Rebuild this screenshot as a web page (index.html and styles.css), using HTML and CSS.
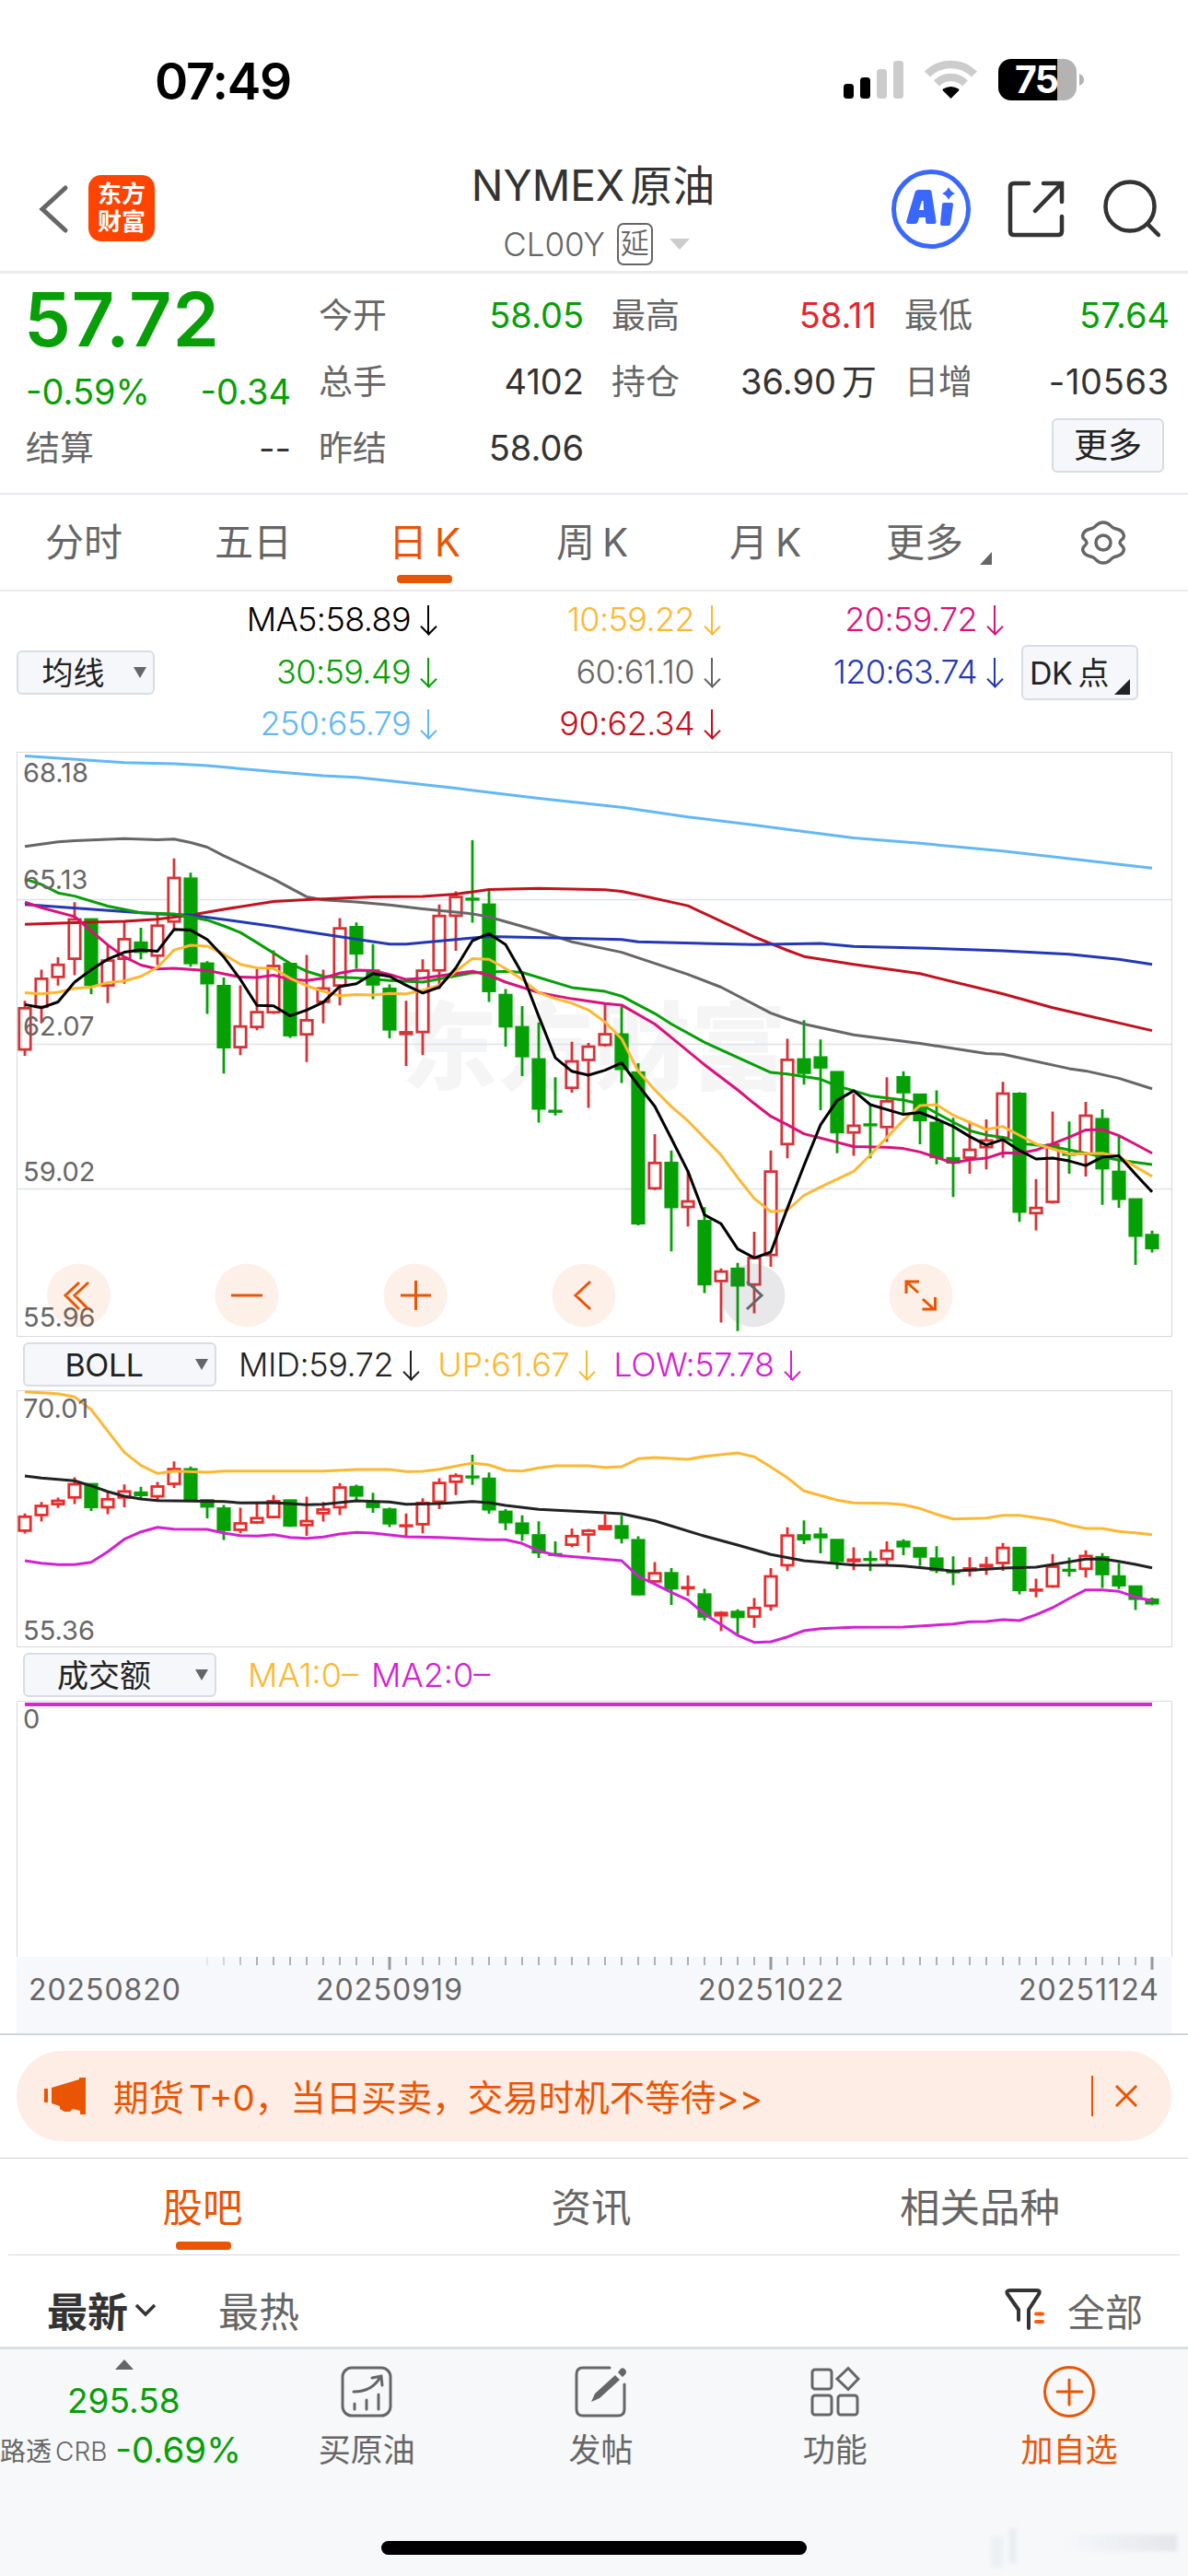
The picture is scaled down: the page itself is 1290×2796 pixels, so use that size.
FILE: index.html
```html
<!DOCTYPE html>
<html lang="zh-CN">
<head>
	<meta charset="utf-8">
	<title>NYMEX原油</title>
	<link rel="stylesheet" href="styles.css">
</head>
<body>
<div class="page">
  <!-- status bar -->
  <div class="status">
    <span class="time">07:49</span>
    <svg class="status-icons" width="266" height="50" viewBox="914 62 266 50">
      <rect x="916" y="91" width="11" height="16" rx="3.5"/>
      <rect x="934" y="84" width="11" height="23" rx="3.5"/>
      <rect x="952" y="75" width="11" height="32" rx="3.5" fill="#ccc"/>
      <rect x="970" y="66" width="11" height="41" rx="3.5" fill="#ccc"/>
      <path d="M1007 80.5a36 36 0 0 1 51 0" fill="none" stroke="#ccc" stroke-width="8.5"/>
      <path d="M1017 90.5a22 22 0 0 1 31 0" fill="none" stroke="#ccc" stroke-width="8.5"/>
      <path d="M1032.5 107l-8.5-8.5q-1-1 0-2q8.5-5 17 0q1 1 0 2z"/>
      <path d="M1098 64h50v45h-50a14 14 0 0 1-14-14v-17a14 14 0 0 1 14-14z"/>
      <path d="M1148 64h7a14 14 0 0 1 14 14v17a14 14 0 0 1-14 14h-7z" fill="#b3b3b3"/>
      <path d="M1172 80q5 2 5 6.5t-5 6.5z" fill="#b3b3b3"/>
      <text class="battery" x="1102" y="101" textLength="48">75</text>
    </svg>
  </div>

  <!-- title bar -->
  <div class="header">
    <svg class="back" width="34" height="54" viewBox="0 0 34 54"><path d="M30 4L5 27l25 23"/></svg>
    <div class="logo"><span>东方</span><span>财富</span></div>
    <div class="title">
      <div class="name">NYMEX<span class="cn">原油</span></div>
      <div class="code"><span>CL00Y</span><b>延</b><i></i></div>
    </div>
    <svg class="head-icons" width="294" height="90" viewBox="966 182 294 90">
      <circle cx="1011" cy="227" r="40.5" stroke="#3a68ff" stroke-width="5"/>
      <path class="ai" fill-rule="evenodd" d="M997 206h12q2 0 2.5 2l5 32q.5 3-2.5 3h-7q-2 0-2-3v-4h-7l-1 4q-1 3-3 3h-7q-4 0-2.5-4l9-30q1-3 3.5-3zM1001 218l-3 10h5l-.5-10z"/>
      <path class="ai" d="M1025 220h8q2 0 2 2l-3 21q0 2-2 2h-7q-2 0-2-2l2-21q0-2 2-2zM1030 203q2 5 7 7q-5 2-7 7q-2-5-7-7q5-2 7-7z"/>
      <path d="M1117 199h-16q-4 0-4 4v48q0 4 4 4h48q4 0 4-4v-16M1133 199h20v20M1152 200l-28 29"/>
      <circle cx="1227" cy="224" r="26.5"/>
      <path d="M1246 243l12 12"/>
    </svg>
  </div>

  <!-- quote -->
  <div class="quote">
    <div class="col first">
      <div class="price green">57.72</div>
      <div class="row green"><span>-0.59%</span><span>-0.34</span></div>
      <div class="row"><label>结算</label><span>--</span></div>
    </div>
    <div class="col">
      <div class="row"><label>今开</label><span class="green">58.05</span></div>
      <div class="row"><label>总手</label><span>4102</span></div>
      <div class="row"><label>昨结</label><span>58.06</span></div>
    </div>
    <div class="col">
      <div class="row"><label>最高</label><span class="red">58.11</span></div>
      <div class="row"><label>持仓</label><span>36.90<span class="cn">万</span></span></div>
    </div>
    <div class="col">
      <div class="row"><label>最低</label><span class="green">57.64</span></div>
      <div class="row"><label>日增</label><span class="wide">-10563</span></div>
      <div class="row end"><a class="btn more">更多</a></div>
    </div>
  </div>

  <!-- period tabs -->
  <div class="periods">
    <span>分时</span>
    <span>五日</span>
    <span class="on">日<em>K</em></span>
    <span>周<em>K</em></span>
    <span>月<em>K</em></span>
    <span class="drop">更多</span>
    <svg width="50" height="50" viewBox="0 0 50 50"><path d="M25 3C32 3 32 7 36 9S45 10 47 16S43 21 43 25S49 28 47 34S40 39 36 41S32 47 25 47S18 43 14 41S5 40 3 34S7 29 7 25S1 22 3 16S10 11 14 9S18 3 25 3z"/><circle cx="25" cy="25" r="8"/></svg>
  </div>

  <!-- moving averages -->
  <div class="ma">
    <a class="btn select line">均线</a>
    <div class="values">
      <span class="c5">MA5:58.89<s></s></span><span class="c10">10:59.22<s></s></span><span class="c20">20:59.72<s></s></span>
      <span class="c30">30:59.49<s></s></span><span class="c60">60:61.10<s></s></span><span class="c120">120:63.74<s></s></span>
      <span class="c250">250:65.79<s></s></span><span class="c90">90:62.34<s></s></span>
    </div>
    <a class="btn dk">DK<span class="cn">点</span></a>
  </div>

  <svg class="chart" id="kline" width="1290" height="636" viewBox="0 816 1290 636">
    <rect class="frame" x="18.5" y="816.5" width="1254" height="634"/>
    <text class="mark" x="436" y="1175" textLength="418">东方财富</text>
    <path class="grid" d="M19 976.5h1253M19 1133.5h1253M19 1290.5h1253"/>
    <g class="plot"></g>
    <g class="scale">
      <text x="25" y="849">68.18</text>
      <text x="25" y="965">65.13</text>
      <text x="25" y="1124">62.07</text>
      <text x="25" y="1282">59.02</text>
      <text x="25" y="1440">55.96</text>
    </g>
    <g class="tools">
      <circle cx="85.5" cy="1406" r="34.5"/><circle cx="268" cy="1406" r="34.5"/><circle cx="451" cy="1406" r="34.5"/><circle cx="634" cy="1406" r="34.5"/><circle class="off" cx="818" cy="1406" r="34.5"/><circle cx="1000" cy="1406" r="34.5"/>
      <path d="M86 1392l-15 14 15 15M96 1392l-15 14 15 15M251 1406h34M435 1406h33M451.5 1390v32M641 1391l-16 15 16 15M984 1404v-13h14M985 1392l12 11M1002 1410l12 11M1001.5 1421h14v-13"/>
      <path class="off" d="M811 1391l16 15-16 15"/>
    </g>
  </svg>

  <div class="sub">
    <a class="btn select">BOLL</a>
    <span class="mid">MID:59.72<s></s></span><span class="c10">UP:61.67<s></s></span><span class="low">LOW:57.78<s></s></span>
  </div>
  <svg class="chart" id="boll" width="1290" height="279" viewBox="0 1509 1290 279">
    <rect class="frame" x="18.5" y="1509.5" width="1254" height="278"/>
    <g class="plot"></g>
    <g class="scale">
      <text x="25" y="1539">70.01</text>
      <text x="25" y="1780">55.36</text>
    </g>
  </svg>

  <div class="sub vol">
    <a class="btn select">成交额</a>
    <span class="c10">MA1:0–</span><span class="low">MA2:0–</span>
  </div>
  <svg class="chart" id="volume" width="1290" height="361" viewBox="0 1846 1290 361">
    <path class="frame" d="M18.5 2124V1846.5H1272.5V2124"/>
    <path d="M27 1850h1224" stroke="#d22bc8" stroke-width="4"/>
    <text class="zero" x="25" y="1876">0</text>
    <rect x="18" y="2124" width="1254" height="83" fill="#f7f8fb"/>
    <g class="ticks"></g>
    <g class="dates">
      <text x="31" y="2171" textLength="165">20250820</text>
      <text x="343" y="2171" textLength="159">20250919</text>
      <text x="758" y="2171" textLength="158">20251022</text>
      <text x="1106" y="2171" textLength="152">20251124</text>
    </g>
  </svg>

  <!-- notice -->
  <div class="notice-wrap">
    <div class="notice">
      <svg width="46" height="40" viewBox="0 0 46 40"><path d="M0 12h4v15H0zM8 11L38 2V0h7v40h-6v-4l-8-2-3 3h-6l-5-3v-3l-9-3z"/></svg>
      <span class="txt">期货<em>T+0</em>，当日买卖，交易时机不等待<em class="gt">&gt;&gt;</em></span>
      <span class="bar"></span>
      <svg width="26" height="26" viewBox="0 0 26 26"><path class="x" d="M2 2l22 22M24 2L2 24"/></svg>
    </div>
  </div>

  <!-- community -->
  <div class="tabs">
    <span class="on">股吧</span><span>资讯</span><span>相关品种</span>
  </div>
  <div class="filter">
    <b>最新</b>
    <svg width="24" height="16" viewBox="0 0 24 16"><path d="M2 3l10 10L22 3"/></svg>
    <span class="hot">最热</span>
    <svg class="funnel" width="44" height="46" viewBox="0 0 44 46"><path d="M15 34V23L3 6q-2-4 3-4h29q4 0 2 4L26 23v20"/><path class="o" d="M34 27.5h7M34 36h7"/></svg>
    <span>全部</span>
  </div>

  <!-- bottom bar -->
  <div class="bottom">
    <div class="index">
      <i></i>
      <div class="green">295.58</div>
      <div class="crb"><span>路透<em>CRB</em></span><b class="green">-0.69%</b></div>
    </div>
    <div class="item">
      <svg viewBox="0 0 56 56"><rect x="2" y="2" width="52" height="52" rx="10"/><path d="M14 28q20 0 29-16M34 13l10-2 1 10M15 41v6M28 37v10M41 31v16"/></svg>
      <span>买原油</span>
    </div>
    <div class="item">
      <svg viewBox="0 0 56 56"><path d="M38 2H9q-7 0-7 7v38q0 7 7 7h38q7 0 7-7V20"/><path class="fill" d="M44 10l5 5-22 20-9 4 4-9zM47 7l3-4q3-2 5 1t0 5l-3 3z"/></svg>
      <span>发帖</span>
    </div>
    <div class="item">
      <svg viewBox="0 0 56 56"><rect x="3" y="4" width="21" height="21" rx="3"/><rect x="3" y="32" width="21" height="21" rx="3"/><rect x="31" y="32" width="21" height="21" rx="3"/><path d="M42 2.5L53 14 42 25.5 30 14z"/></svg>
      <span>功能</span>
    </div>
    <div class="item orange">
      <svg viewBox="0 0 56 56"><circle cx="28" cy="28" r="26.5"/><path d="M15 28h27M28 15v27"/></svg>
      <span>加自选</span>
    </div>
    <div class="home"></div>
    <div class="smudge"></div>
  </div>
</div>
<script src="chart.js"></script>
</body>
</html>
```
FILE: styles.css
```css
body {
  margin: 0;
  background: #fff;
  color: #333;
  font-family: Inter, "Noto Sans CJK SC", sans-serif;
  font-size: 38px;
}
* {
  box-sizing: border-box;
}
em, i {
  font-style: normal;
}
svg {
  display: block;
  flex: none;
}
.page {
  width: 1290px;
  height: 2796px;
  overflow: hidden;
}
.green {
  color: #089e08;
}
.red {
  color: #e5252d;
}
.orange {
  color: #ea5504;
}
.cn {
  margin-left: 6px;
}

/* status bar */
.status {
  display: flex;
  justify-content: space-between;
  height: 176px;
  padding: 62px 110px 0 168px;
}
.time {
  font-size: 55px;
  line-height: 52px;
  font-weight: 600;
  letter-spacing: -1.3px;
  color: #000;
}
.battery {
  font-size: 41px;
  font-weight: 700;
  fill: #fff;
}

/* title bar */
.header {
  display: flex;
  height: 121px;
  padding: 0 30px 0 41px;
  border-bottom: 3px solid #ebebee;
}
.back {
  margin: 24px 21px 0 0;
}
.back path {
  fill: none;
  stroke: #666;
  stroke-width: 5;
  stroke-linecap: round;
}
.logo {
  display: flex;
  flex-direction: column;
  width: 72px;
  height: 72px;
  margin-top: 14px;
  padding-top: 6px;
  border-radius: 14px;
  background: #ff4400;
  color: #fff;
  font-size: 26px;
  line-height: 30px;
  font-weight: 700;
  text-align: center;
}
.title {
  flex: 1;
  padding: 0 0 0 154px;
  text-align: center;
}
.name {
  height: 56px;
  font-size: 46px;
  line-height: 50px;
}
.code {
  display: flex;
  justify-content: center;
  align-items: center;
  padding-left: 7px;
  color: #666;
  font-size: 35px;
  line-height: 66px;
  font-weight: 350;
}
.code b {
  width: 39px;
  height: 46px;
  margin: 0 18px 0 13px;
  border: 2px solid #666;
  border-radius: 7px;
  font-size: 31px;
  line-height: 40px;
  font-weight: 350;
}
.code i {
  border: 11px solid transparent;
  border-top: 12px solid #ccc;
  border-bottom: 0;
}
.head-icons {
  margin-top: 6px;
  fill: none;
  stroke: #333;
  stroke-width: 4.5;
  stroke-linecap: round;
}
.head-icons .ai {
  fill: #3a68ff;
  stroke: none;
}

/* quote */
.quote {
  display: flex;
  gap: 30px;
  height: 240px;
  padding: 9px 19px 0 28px;
  border-bottom: 2px solid #e9ebee;
}
.col {
  width: 288px;
}
.row {
  display: flex;
  justify-content: space-between;
  height: 72px;
  line-height: 73px;
}
.row label {
  color: #666;
  font-size: 37px;
}
.row .wide {
  letter-spacing: .7px;
}
.first .price {
  height: 83px;
  margin-left: -2px;
  font-size: 81px;
  line-height: 83px;
  font-weight: 600;
  letter-spacing: .8px;
}
.first .row:nth-child(2) {
  height: 61px;
}
.row.end {
  justify-content: flex-end;
  padding-right: 6px;
}
.btn {
  display: block;
  border: 2px solid #d8dce3;
  border-radius: 6px;
  background: #f6f7fa;
  color: #222;
}
.more {
  width: 122px;
  height: 59px;
  margin-top: 4px;
  font-size: 37px;
  line-height: 56px;
  text-align: center;
}

/* period tabs */
.periods {
  display: flex;
  align-items: center;
  height: 105px;
  padding-left: 49px;
  border-bottom: 2px solid #e9ebee;
  color: #666;
  font-size: 42px;
}
.periods span {
  position: relative;
  width: 184px;
  line-height: 60px;
}
.periods em {
  margin-left: 8px;
}
.periods span:nth-child(3) {
  width: 182px;
  margin-left: 5px;
}
.periods span:nth-child(4) {
  width: 188px;
}
.periods span:nth-child(5) {
  width: 170px;
}
.periods .drop {
  width: 211px;
}
.periods .drop::after {
  content: "";
  position: absolute;
  left: 102px;
  bottom: 6px;
  border-left: 13px solid transparent;
  border-bottom: 14px solid #666;
}
.periods .on, .tabs .on {
  color: #ea5504;
}
.periods .on::after {
  content: "";
  position: absolute;
  left: 9px;
  bottom: -14px;
  width: 60px;
  height: 9px;
  border-radius: 4px;
  background: #ea5504;
}
.periods svg {
  fill: none;
  stroke: #666;
  stroke-width: 3.5;
}

/* moving averages */
.ma {
  display: flex;
  height: 174px;
  padding: 2px 0 0 18px;
}
.select {
  position: relative;
  width: 210px;
  height: 48px;
  padding-right: 34px;
  font-size: 34px;
  line-height: 45px;
  text-align: center;
}
.select::after {
  content: "";
  position: absolute;
  right: 7px;
  top: 16px;
  border: 7px solid transparent;
  border-top: 12px solid #666;
  border-bottom: 0;
}
.select.line {
  width: 150px;
  margin-top: 62px;
  padding-right: 27px;
}
.values {
  display: grid;
  grid-template-columns: 304px 308px 307px;
  grid-auto-rows: 56.5px;
  font-size: 36px;
  line-height: 57px;
  font-weight: 300;
  letter-spacing: -.6px;
  text-align: right;
}
s {
  display: inline-block;
  position: relative;
  width: 15px;
  height: 33px;
  margin-left: 11px;
  vertical-align: -5px;
}
s::before {
  content: "";
  position: absolute;
  left: 6.5px;
  top: 0;
  height: 32px;
  border-left: 2px solid;
}
s::after {
  content: "";
  position: absolute;
  left: 2px;
  bottom: 3px;
  width: 11px;
  height: 11px;
  border: solid;
  border-width: 0 2px 2px 0;
  transform: rotate(45deg);
}
.c5 { color: #000; }
.c10 { color: #fdb833; }
.c20 { color: #d9127d; }
.c30 { color: #089e08; }
.c60 { color: #666; }
.c120 { color: #2437b5; }
.c250 { color: #62b8f5; }
.c90 { color: #c1121f; }
.mid { color: #222; }
.low { color: #d321d3; }
.dk {
  position: relative;
  width: 127px;
  height: 60px;
  margin: 56px 0 0 22px;
  padding-left: 7px;
  font-size: 34px;
  line-height: 57px;
  letter-spacing: -.5px;
}
.dk::after {
  content: "";
  position: absolute;
  right: 7px;
  bottom: 4px;
  border-left: 17px solid transparent;
  border-bottom: 17px solid #222;
}

/* charts */
.frame {
  fill: none;
  stroke: #d6d8db;
}
.grid {
  stroke: #dfe1ea;
  stroke-width: 1.5;
}
.mark {
  font-size: 104px;
  font-weight: 900;
  fill: #f5f5f6;
}
.scale text, .zero {
  font-size: 29px;
  fill: #666;
}
.plot polyline {
  fill: none;
  stroke: currentColor;
  stroke-width: 3;
  stroke-linejoin: round;
}
.up {
  fill: #fff;
  stroke: #d43338;
  stroke-width: 2.8;
}
#boll .up {
  stroke: #ea2b2b;
}
.down {
  fill: #04a004;
  stroke: #04a004;
  stroke-width: 2.8;
}
.tools circle {
  fill: #ea5504;
  fill-opacity: .09;
}
.tools circle.off {
  fill: #667;
  fill-opacity: .15;
}
.tools path {
  fill: none;
  stroke: #ea5504;
  stroke-width: 3;
}
.tools path.off {
  stroke: #666;
}
.sub {
  display: flex;
  height: 57px;
  padding: 5px 0 0 25px;
  font-size: 36px;
  line-height: 49px;
  font-weight: 300;
  letter-spacing: -.4px;
}
.sub .btn {
  margin-right: 24px;
  font-weight: 400;
}
.sub span {
  margin-right: 22px;
}
.vol {
  height: 58px;
  padding-top: 6px;
  letter-spacing: 0;
}
.vol .btn {
  margin-right: 34px;
}
.vol span {
  margin-right: 14px;
}
.dates text {
  font-size: 32px;
  fill: #666;
}

/* notice */
.notice-wrap {
  height: 136px;
  padding: 17px 18px;
  border-top: 2px solid #d0d3d8;
  border-bottom: 1px solid #d0d3d8;
}
.notice {
  display: flex;
  align-items: center;
  height: 98px;
  padding: 0 36px 0 30px;
  border-radius: 49px;
  background: #fdede4;
  color: #ea5504;
  fill: #ea5504;
}
.notice .txt {
  flex: 1;
  padding: 0 0 3px 29px;
  font-size: 38.5px;
}
.notice em {
  margin-left: 5px;
}
.notice em.gt {
  margin-left: 0;
}
.notice .bar {
  width: 2px;
  height: 44px;
  margin-right: 23px;
  background: #ea5504;
}
.notice .x {
  stroke: #ea5504;
  stroke-width: 3;
}

/* community */
.tabs {
  display: flex;
  height: 105px;
  margin: 0 9px;
  border-bottom: 1px solid #d6d8db;
  color: #666;
  font-size: 43.5px;
  line-height: 106px;
  text-align: center;
}
.tabs span {
  position: relative;
  width: 422px;
}
.tabs .on::after {
  content: "";
  position: absolute;
  left: 182px;
  bottom: 5px;
  width: 60px;
  height: 9px;
  border-radius: 4px;
  background: #ea5504;
}
.filter {
  display: flex;
  align-items: center;
  height: 99px;
  padding: 18px 49px 0 51px;
  color: #666;
  font-size: 44px;
}
.filter b {
  margin-right: 7px;
  color: #333;
}
.filter svg {
  fill: none;
  stroke: #333;
  stroke-width: 3.5;
}
.hot {
  flex: 1;
  margin-left: 67px;
}
.filter .funnel {
  margin-right: 24px;
  stroke-width: 4;
  stroke-linecap: round;
}
.funnel .o {
  stroke: #ff5a0a;
}
.funnel + span {
  font-size: 41px;
}

/* bottom bar */
.bottom {
  display: flex;
  position: relative;
  height: 250px;
  border-top: 3px solid #dcdee2;
  background: #f6f8fa;
  color: #666;
}
.index {
  width: 271px;
}
.index i {
  display: block;
  width: 0;
  margin: 11px 0 10px 125px;
  border: 10.5px solid transparent;
  border-top: 0;
  border-bottom: 11px solid #666;
}
.index .green {
  padding-left: 73px;
  font-size: 37px;
  line-height: 48px;
}
.crb {
  display: flex;
  align-items: center;
  height: 58px;
  font-size: 28px;
}
.index .crb b {
  padding-left: 9px;
  font-size: 38.5px;
  font-weight: 400;
}
.crb em {
  margin-left: 4px;
  font-weight: 350;
}
.item {
  width: 254.3px;
  padding-top: 18px;
  font-size: 35px;
  line-height: 52px;
  text-align: center;
}
.item svg {
  width: 56px;
  height: 56px;
  margin: 0 auto 9px;
  fill: none;
  stroke: currentColor;
  stroke-width: 3;
  stroke-linecap: round;
}
.item svg .fill {
  fill: #666;
  stroke: none;
}
.home {
  position: absolute;
  left: 414px;
  bottom: 24px;
  width: 462px;
  height: 15px;
  border-radius: 8px;
  background: #000;
}
.smudge {
  position: absolute;
  right: 12px;
  bottom: 28px;
  width: 120px;
  height: 18px;
  background: linear-gradient(90deg, rgba(220,222,226,0), rgba(220,222,226,.7));
  filter: blur(2px);
}
.smudge::before {
  content: "";
  position: absolute;
  left: -62px;
  top: -7px;
  width: 7px;
  height: 38px;
  background: rgba(220,222,226,.5);
}
.smudge::after {
  content: "";
  position: absolute;
  left: -82px;
  top: 2px;
  width: 13px;
  height: 34px;
  background: rgba(220,222,226,.3);
}
```
FILE: chart.js
```javascript
// one row per day: direction, high, body top, body bottom, low
// levels count downwards from 68.55, 122.3 to the dollar
var days = [
  ['r',680,697,808,822],['r',600,621,698,738],['r',568,585,621,641],['r',426,468,574,614],['g',468,468,641,663],
  ['r',535,574,643,686],['r',476,519,574,636],['g',492,528,556,573],['r',458,484,566,588],['r',313,361,478,500],
  ['g',350,363,585,592],['g',578,582,637,714],['g',620,640,802,868],['r',640,744,802,820],['r',598,707,750,756],
  ['r',550,588,712,714],['g',583,583,771,776],['r',562,728,769,838],['r',600,646,685,738],['r',467,491,643,692],
  ['g',478,488,560,597],['g',534,600,640,676],['g',638,647,756,777],['r',680,759,768,848],['r',573,600,763,820],
  ['r',432,459,604,650],['r',398,410,463,551],['g',266,415,418,479],['g',392,430,657,683],['g',650,663,748,798],
  ['g',694,746,825,874],['g',736,829,960,994],['g',877,962,965,976],['r',786,834,907,917],['r',789,796,835,956],
  ['r',689,764,796,798],['g',695,765,858,892],['g',841,863,1256,1259],['r',1024,1096,1166,1168],['g',1066,1096,1214,1326],
  ['r',1117,1195,1214,1262],['g',1212,1246,1413,1434],['r',1370,1376,1405,1510],['g',1356,1369,1416,1532],['r',1276,1341,1414,1486],
  ['r',1066,1118,1338,1366],['r',778,830,1052,1086],['g',730,829,868,896],['g',780,824,854,962],['g',862,862,1021,1073],
  ['r',920,1000,1022,1080],['g',946,997,1003,1086],['r',877,937,1008,1044],['g',862,875,918,974],['g',920,920,990,1050],
  ['g',911,993,1085,1102],['g',982,1084,1099,1186],['r',990,1062,1087,1126],['r',986,1038,1060,1115],['r',889,917,1036,1085],
  ['g',916,918,1226,1250],['r',1140,1212,1230,1272],['r',966,1049,1201,1203],['g',991,1073,1076,1126],['r',941,974,1077,1133],
  ['g',960,983,1114,1206],['g',1030,1119,1193,1214],['g',1190,1190,1288,1361],['g',1273,1282,1320,1329]
];

// day, level, day, level ...
var averages = {
  c250: [0,49,6,66,9,69,11,74,16,93,18,100,20,104,22,113,26,132,31,158,36,181,40,206,44,227,46,238,50,260,54,274,59,294,64,318,68,338],
  c60: [0,282,2,270,3,267,6,262,8,265,9,263,10,272,11,284,12,306,15,366,17,412,18,420,20,425,22,433,24,443,27,456,28,464,31,500,33,528,36,555,40,612,42,645,45,712,46,727,47,740,50,768,54,790,58,816,59,818,63,855,64,861,66,880,68,907],
  c90: [0,483,3,479,6,475,8,470,10,459,12,444,15,424,17,419,21,412,24,411,26,405,28,393,31,390,35,394,36,398,37,407,40,435,44,515,46,550,47,566,50,586,54,610,59,662,62,698,68,757],
  c120: [0,432,8,456,10,459,15,488,17,502,22,534,23,534,26,522,28,514,32,518,36,522,37,528,44,535,48,532,50,540,54,544,59,551,63,560,66,573,68,586],
  c30: [0,366,1,380,2,402,3,410,5,436,7,453,9,456,11,472,12,487,13,504,14,530,16,584,17,604,18,617,20,621,22,628,24,632,27,608,29,604,30,607,33,646,35,656,36,668,38,713,39,740,41,787,45,865,46,869,48,882,49,900,50,912,51,925,53,936,54,946,55,970,56,993,57,1015,58,1026,59,1032,60,1048,62,1056,64,1073,66,1091,68,1102],
  c20: [0,426,1,440,3,463,4,500,5,536,6,567,7,588,8,598,9,596,11,602,13,619,14,620,15,614,16,625,17,628,18,622,19,609,20,601,21,602,22,612,23,625,24,622,27,604,28,614,29,632,31,659,33,675,35,687,36,691,38,740,39,775,41,845,43,910,44,945,45,978,46,1000,47,1023,50,1056,52,1058,53,1061,54,1070,56,1098,57,1090,58,1086,59,1072,60,1073,61,1065,63,1032,64,1013,65,1012,66,1028,67,1050,68,1073],
  c10: [0,659,1,662,2,658,3,648,4,645,5,633,6,629,7,617,8,594,9,549,10,537,11,539,12,560,13,586,14,595,15,597,16,622,17,641,18,656,19,667,20,664,21,665,22,661,23,662,24,653,25,640,26,604,27,571,28,573,29,597,30,625,31,659,32,675,33,686,34,704,35,735,36,778,37,862,38,910,39,953,40,990,41,1034,42,1078,43,1136,44,1190,45,1224,46,1220,47,1182,48,1160,50,1120,51,1078,52,1032,53,988,54,950,55,948,56,975,58,1012,59,1004,60,1027,61,1049,63,1075,65,1073,66,1082,67,1108,68,1133],
  c5: [0,690,1,698,2,683,3,632,4,600,5,573,6,555,7,549,8,552,9,496,10,498,11,522,12,567,13,625,14,692,15,693,16,719,17,704,18,684,19,643,20,636,21,610,22,617,23,640,24,660,25,645,26,595,27,525,28,507,29,535,30,610,31,720,32,827,33,862,34,872,35,859,36,840,37,898,38,952,39,1035,40,1120,41,1232,42,1255,43,1320,44,1343,45,1328,46,1215,47,1105,48,1000,49,937,50,912,51,948,53,973,54,968,55,985,56,1004,57,1030,58,1052,59,1038,60,1066,61,1088,62,1086,63,1093,64,1105,65,1083,66,1080,67,1127,68,1173]
};

// bollinger bands, thirds of a pixel
var bands = {
  c10: [0,212,1,215,2,218,3,229,4,270,5,340,6,409,7,452,8,478,9,470,11,474,12,470,18,470,20,465,22,465,23,472,24,471,25,464,27,444,28,450,29,468,30,470,31,460,32,453,34,453,35,458,36,456,37,430,38,426,40,432,41,422,43,411,44,424,45,457,46,492,47,535,48,550,49,565,50,574,52,575,53,580,54,592,55,611,56,626,58,623,59,614,60,614,62,630,63,646,64,657,65,657,66,667,67,671,68,677],
  mid: [0,486,1,493,3,502,4,518,5,537,6,552,7,561,8,566,12,569,13,574,15,573,17,580,18,578,20,567,22,571,23,578,25,576,27,569,28,573,29,582,31,595,34,603,36,609,38,632,41,682,43,711,45,742,47,762,50,776,52,777,53,779,55,790,56,796,58,790,59,786,61,783,63,766,64,757,65,756,66,764,67,774,68,785],
  low: [0,762,1,770,2,775,3,775,4,767,5,733,6,692,7,668,8,653,9,659,11,660,12,672,13,680,14,682,15,677,16,686,17,689,18,685,19,675,20,670,21,672,23,684,25,686,28,694,29,694,30,706,31,730,32,744,34,753,36,762,37,813,38,838,39,865,40,890,41,936,42,970,43,1005,44,1028,45,1026,46,1010,47,990,48,983,50,979,53,978,56,968,57,961,58,960,59,954,60,957,61,938,62,915,63,885,64,857,65,857,66,862,67,880,68,893]
};

function klineY(v) { return 800 + v / 2.3757; }
function bollY(v) { return 1538 + v * 0.1539; }
function bandY(v) { return 1440 + v / 3; }
function dayX(i) { return 27 + 18 * i; }

function candles(toY) {
  return days.map(function (d, i) {
    var x = dayX(i), y = d.slice(1).map(toY);
    var cls = d[0] == 'r' ? 'up' : 'down';
    var h = Math.max(y[2] - y[1] - 2, 0.5);
    return '<path class="' + cls + '" d="M' + x + ' ' + y[0] + 'V' + y[1] + 'M' + x + ' ' + y[2] + 'V' + y[3] + '"/>' +
      '<rect class="' + cls + '" x="' + (x - 6.2) + '" y="' + (y[1] + 1) + '" width="12.4" height="' + h + '"/>';
  }).join('');
}

function lines(set, toY) {
  return Object.keys(set).map(function (name) {
    var pts = [];
    for (var i = 0; i < set[name].length; i += 2) {
      pts.push(dayX(set[name][i]) + ',' + toY(set[name][i + 1]).toFixed(1));
    }
    return '<polyline class="' + name + '" points="' + pts.join(' ') + '"/>';
  }).join('');
}

document.querySelector('#kline .plot').innerHTML = candles(klineY) + lines(averages, klineY);
document.querySelector('#boll .plot').innerHTML = candles(bollY) + lines(bands, bandY);

// time axis ticks, a long one under each date
var ticks = '';
for (var i = 11; i <= 68; i++) {
  var big = i == 22 || i == 45 || i == 68;
  ticks += '<path d="M' + dayX(i) + ' 2124v' + (big ? 14 : 9) + '" stroke="#999" stroke-width="' + (big ? 3 : 1.5) +
    '" opacity="' + Math.min(1, (i - 10) / 4) + '"/>';
}
document.querySelector('#volume .ticks').innerHTML = ticks;
```
